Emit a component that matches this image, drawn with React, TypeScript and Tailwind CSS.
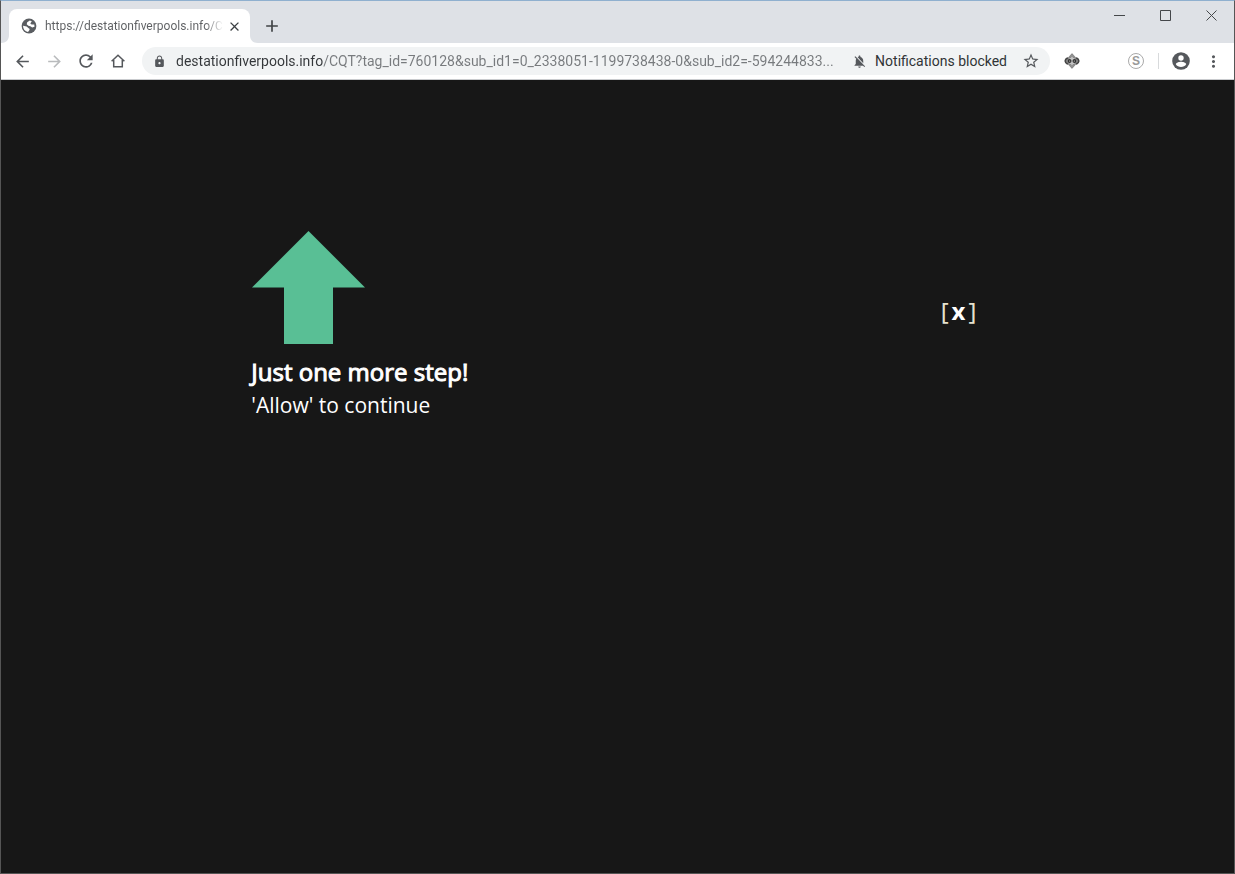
import React from "react";
import {
  MdAdd,
  MdArrowBack,
  MdArrowForward,
  MdClose,
  MdLock,
  MdMoreVert,
  MdNotificationsOff,
  MdRefresh,
  MdStarBorder,
} from "react-icons/md";

function IconButton({ label, className = "", children }: { label: string; className?: string; children: React.ReactNode }) {
  return (
    <button type="button" aria-label={label} className={`flex h-7 shrink-0 items-center justify-center ${className}`}>
      {children}
    </button>
  );
}

function GlobeIcon() {
  return (
    <svg width="16" height="16" viewBox="0 0 16 16" className="shrink-0" aria-hidden="true">
      <circle cx="8" cy="8" r="7.4" fill="#5a5d61" />
      <path d="M8.8 2.4 6.2 4.2 5.7 6.3 7.4 7.7 9.3 8.2 11.2 9.6 13.5 8.7 13.3 6.6 10.6 6.4 9.3 5.4 10.8 3.2Z" fill="#fff" />
      <path d="M2 7.7 5.6 8.6 7.3 10.1 8.7 11 8.3 12.3 7 14C4 13.4 2 11 2 7.7Z" fill="#fff" />
    </svg>
  );
}

function HomeIcon() {
  return (
    <svg width="16" height="16" viewBox="0 0 16 16" fill="none" stroke="currentColor" strokeWidth="1.5" aria-hidden="true">
      <path d="M1.6 8.2 8 2.2l6.4 6M3.7 7v6.8h8.6V7" />
    </svg>
  );
}

function AccountIcon() {
  return (
    <svg width="18" height="18" viewBox="0 0 18 18" aria-hidden="true">
      <circle cx="9" cy="9" r="8.8" fill="currentColor" />
      <circle cx="9" cy="6" r="2.7" fill="#fff" />
      <path d="M3.8 12.3c0-1.7 3.5-2.6 5.2-2.6s5.2.9 5.2 2.6c-1.1 1.7-3 2.7-5.2 2.7s-4.1-1-5.2-2.7Z" fill="#fff" />
    </svg>
  );
}

function EyeDiamondIcon() {
  return (
    <svg width="16" height="16" viewBox="0 0 16 16" fill="none" aria-hidden="true">
      <path d="M8 1.2 14 8 8 14.800 2 8Z" fill="#c4c4c4" stroke="#8a8a8a" strokeWidth="1.6" strokeLinejoin="round" />
      <path d="m5.5 5.300 2.500-2 2.500 2M5.500 10.700l2.500 2 2.500-2" stroke="#8a8a8a" />
      <path d="M3.800 4.800C.3 6.800.3 9.200 3.800 11.200M12.200 4.800c3.500 2 3.500 4.400 0 6.400" stroke="#444" strokeWidth="1.600" />
      <circle cx="5.500" cy="8" r="2" fill="#303030" />
      <circle cx="10.500" cy="8" r="2" fill="#303030" />
      <circle cx="5.700" cy="8" r=".6" fill="#ddd" />
      <circle cx="10.300" cy="8" r=".6" fill="#ddd" />
    </svg>
  );
}

function TabStrip() {
  return (
    <header className="flex h-[42px] items-start bg-[#dee1e6]">
      <div className="flex h-full w-[249px] items-end">
        <svg width="8" height="8" viewBox="0 0 8 8" className="shrink-0" aria-hidden="true">
          <path d="M8 0v8H0c5 0 8-3 8-8Z" fill="#fff" />
        </svg>
        <div className="flex h-[34px] min-w-0 flex-1 items-center rounded-t-lg bg-white pl-3 pr-1.5">
          <GlobeIcon />
          <span className="ml-2 whitespace-nowrap bg-linear-to-r from-[#5d5f62] from-90% to-[#fff] bg-clip-text font-[Roboto,sans-serif] text-xs text-transparent">
            https://destationfiverpools.info/C
          </span>
          <IconButton label="Close tab" className="ml-auto w-5 text-[#3c4043]">
            <MdClose size={15} />
          </IconButton>
        </div>
        <svg width="8" height="8" viewBox="0 0 8 8" className="-mr-2 shrink-0" aria-hidden="true">
          <path d="M0 0v8h8C3 8 0 5 0 0Z" fill="#fff" />
        </svg>
      </div>
      <IconButton label="New tab" className="ml-2 mt-[11px] w-7 text-[#404346]">
        <MdAdd size={20} />
      </IconButton>
      <div className="ml-auto flex text-[#44474a]">
        <IconButton label="Minimize" className="w-[46px]">
          <svg width="11" height="11" viewBox="0 0 11 11" stroke="currentColor" aria-hidden="true">
            <path d="M0 5.5h11" />
          </svg>
        </IconButton>
        <IconButton label="Maximize" className="w-[46px]">
          <svg width="11" height="11" viewBox="0 0 11 11" fill="none" stroke="currentColor" aria-hidden="true">
            <path d="M.5.5h10v10H.5Z" />
          </svg>
        </IconButton>
        <IconButton label="Close window" className="w-[46px]">
          <svg width="11" height="11" viewBox="0 0 11 11" stroke="currentColor" aria-hidden="true">
            <path d="m.5.5 10 10m0-10-10 10" />
          </svg>
        </IconButton>
      </div>
    </header>
  );
}

function Toolbar() {
  return (
    <nav className="flex h-[37px] items-center border-b border-[#c9cbce] bg-white px-[5px] text-[#55585c]">
      <IconButton label="Back" className="w-8">
        <MdArrowBack size={19} />
      </IconButton>
      <IconButton label="Forward" className="w-8 text-[#b9bbbd]">
        <MdArrowForward size={19} />
      </IconButton>
      <IconButton label="Reload" className="w-8">
        <MdRefresh size={20} />
      </IconButton>
      <IconButton label="Home" className="w-8">
        <HomeIcon />
      </IconButton>
      <div className="ml-2 flex h-7 min-w-0 flex-1 items-center rounded-full bg-[#f1f3f4] pl-[11px] pr-[3px] font-[Roboto,sans-serif] text-sm">
        <MdLock size={13} className="shrink-0" />
        <input
          aria-label="Address"
          readOnly
          value="destationfiverpools.info/CQT?tag_id=760128&sub_id1=0_2338051-1199738438-0&sub_id2=-594244833..."
          className="ml-[10px] min-w-0 flex-1 bg-linear-to-r from-[#34373a] from-[147px] to-[#777a7d] to-[147px] bg-clip-text text-transparent outline-none"
        />
        <MdNotificationsOff size={15} className="shrink-0" />
        <span className="ml-2 whitespace-nowrap text-[#303336]">Notifications blocked</span>
        <IconButton label="Bookmark this page" className="ml-2 w-8">
          <MdStarBorder size={18} />
        </IconButton>
      </div>
      <IconButton label="Watcher extension" className="ml-[6px] w-8">
        <EyeDiamondIcon />
      </IconButton>
      <IconButton label="S extension" className="ml-8 w-8">
        <span className="flex size-4 items-center justify-center rounded-full border border-[#aaa] font-['Liberation_Sans',sans-serif] text-xs font-bold leading-none text-[#999]">
          S
        </span>
      </IconButton>
      <span className="ml-[6px] h-4 w-px bg-[#d8dadc]" />
      <IconButton label="Profile" className="ml-[6px] w-8">
        <AccountIcon />
      </IconButton>
      <IconButton label="Menu" className="w-8">
        <MdMoreVert size={19} />
      </IconButton>
    </nav>
  );
}

export default function App() {
  return (
    <div className="flex min-h-screen flex-col border border-[#555] border-t-[#8fb0cf] bg-[#171717] font-['Open_Sans',sans-serif]">
      <TabStrip />
      <Toolbar />
      <main className="flex flex-1 items-start justify-between pl-[20.3%] pr-[20.9%] pt-[151px] text-white">
        <section>
          <svg width="114" height="113" viewBox="0 0 114 113" fill="#59bf95" aria-hidden="true">
            <path d="M57.5 0 114 56.500H82V113H33V56.500H1Z" />
          </svg>
          <h1 className="mt-3 text-2xl [-webkit-text-stroke:1px_white]">Just one more step!</h1>
          <p className="mt-0.5 text-[21px]">'Allow' to continue</p>
        </section>
        <button type="button" aria-label="Close" className="mt-16 flex gap-[3px] font-['Noto_Sans',sans-serif] text-2xl text-[#e6e2cf]">
          <span>[</span>
          <b className="text-white">x</b>
          <span>]</span>
        </button>
      </main>
    </div>
  );
}
